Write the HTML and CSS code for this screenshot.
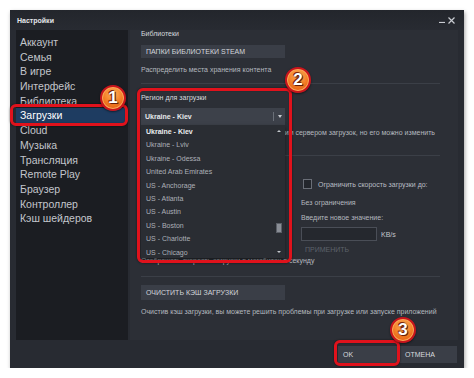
FILE: index.html
```html
<!DOCTYPE html>
<html lang="ru">
<head>
<meta charset="UTF-8" />
<meta name="viewport" content="width=device-width, initial-scale=1" />
<title>Настройки</title>
<link rel="stylesheet" href="styles.css">
</head>
<body>
  <div class="window">
    <!-- Title bar -->
    <div class="titlebar">
      <span class="title">Настройки</span>
      <span class="win-ctrl">
        <svg width="6" height="6" viewBox="0 0 6 6"><path d="M0 5.5h6" stroke="#c9ccd2" stroke-width="1.2"/></svg>
        <svg width="7" height="7" viewBox="0 0 7 7"><path d="M0.5 0.5l6 6M6.5 0.5l-6 6" stroke="#c9ccd2" stroke-width="1.2"/></svg>
      </span>
    </div>

    <div class="main">
      <!-- Sidebar -->
      <nav class="sidebar">
        <div class="nav-item">Аккаунт</div>
        <div class="nav-item">Семья</div>
        <div class="nav-item">В игре</div>
        <div class="nav-item">Интерфейс</div>
        <div class="nav-item">Библиотека</div>
        <div class="nav-item active">Загрузки</div>
        <div class="nav-item">Cloud</div>
        <div class="nav-item">Музыка</div>
        <div class="nav-item">Трансляция</div>
        <div class="nav-item">Remote Play</div>
        <div class="nav-item">Браузер</div>
        <div class="nav-item">Контроллер</div>
        <div class="nav-item">Кэш шейдеров</div>
      </nav>

      <!-- Content -->
      <section class="content">
        <div class="label first">Библиотеки</div>
        <div class="btn-wide">ПАПКИ БИБЛИОТЕКИ STEAM</div>
        <div class="hint gap7">Распределить места хранения контента</div>
        <div class="divider div-a"></div>

        <div class="label region">Регион для загрузки</div>
        <div class="select">
          <span class="select-value">Ukraine - Kiev</span>
          <span class="select-sep"></span>
          <span class="select-arrow"></span>
        </div>
        <div class="hint region-hint">Steam выбирает регион загрузки с ближайшим сервером загрузок, но его можно изменить</div>
        <div class="divider div-b"></div>

        <div class="limits">
          <div class="limits-left"></div>
          <div class="limits-right">
            <div class="check-row">
              <span class="checkbox"></span>
              <span>Ограничить скорость загрузки до:</span>
            </div>
            <div class="hint no-limit">Без ограничения</div>
            <div class="hint new-value">Введите новое значение:</div>
            <div class="input-row">
              <span class="input"></span>
              <span class="unit">KB/s</span>
            </div>
            <div class="apply">ПРИМЕНИТЬ</div>
          </div>
        </div>
        <div class="hint bits">Отображать скорость загрузки в мегабитах в секунду</div>
        <div class="divider div-c"></div>

        <div class="btn-wide cache">ОЧИСТИТЬ КЭШ ЗАГРУЗКИ</div>
        <div class="hint gap7">Очистив кэш загрузки, вы можете решить проблемы при загрузке или запуске приложений</div>

        <!-- Open dropdown -->
        <div class="dropdown">
          <div class="dd-item current">Ukraine - Kiev</div>
          <div class="dd-item">Ukraine - Lviv</div>
          <div class="dd-item">Ukraine - Odessa</div>
          <div class="dd-item">United Arab Emirates</div>
          <div class="dd-item">US - Anchorage</div>
          <div class="dd-item">US - Atlanta</div>
          <div class="dd-item">US - Austin</div>
          <div class="dd-item">US - Boston</div>
          <div class="dd-item">US - Charlotte</div>
          <div class="dd-item">US - Chicago</div>
          <div class="scrollbar">
            <span class="sb-up"></span>
            <span class="sb-thumb"></span>
            <span class="sb-down"></span>
          </div>
        </div>
      </section>
    </div>

    <!-- Footer buttons -->
    <div class="footer">
      <div class="btn">OK</div>
      <div class="btn">ОТМЕНА</div>
    </div>

    <!-- Annotations -->
    <div class="mark mark-1"></div>
    <div class="mark mark-2"></div>
    <div class="mark mark-3"></div>
    <div class="badge badge-1">1</div>
    <div class="badge badge-2">2</div>
    <div class="badge badge-3">3</div>
  </div>
</body>
</html>
```

FILE: styles.css
```css
* {
  margin: 0;
  padding: 0;
  box-sizing: border-box;
}

html, body {
  background: #fff;
  font-family: 'Liberation Sans', Arial, sans-serif;
  overflow: hidden;
}

.window {
  position: relative;
  width: 454px;
  height: 358px;
  margin: 10px 0 0 10px;
  background: #282b32;
  box-shadow: 1px 2px 4px rgba(0, 0, 0, 0.35);
}

/* Title bar */
.titlebar {
  height: 20px;
  padding: 0 9px 0 7px;
  display: flex;
  align-items: center;
  justify-content: space-between;
  background: linear-gradient(#23262c, #282b32);
}

.title {
  font-size: 7px;
  font-weight: bold;
  color: #e4e6ea;
}

.win-ctrl {
  display: flex;
  align-items: center;
  gap: 3px;
}

/* Main area */
.main {
  display: flex;
  gap: 2px;
  height: 310px;
  padding: 0 6px;
}

.sidebar {
  width: 112px;
  background: #1b1d22;
  padding-top: 5px;
}

.nav-item {
  height: 14.7px;
  line-height: 14.7px;
  padding-left: 4px;
  margin-right: 3px;
  font-size: 10.5px;
  color: #c3c6cc;
}

.nav-item.active {
  background: #1e3c61;
  color: #fff;
}

.content {
  position: relative;
  flex: 1;
  background: #2c2f36;
  padding-left: 11px;
  font-size: 7px;
  color: #b4b8bf;
}

.label {
  line-height: 9px;
  color: #d5d8dd;
}

.label.first { line-height: 8px; }
.label.region { margin-top: 9px; }

.btn-wide {
  width: 144px;
  height: 13px;
  margin-top: 7px;
  padding-left: 5px;
  line-height: 13px;
  background: #3a3e47;
  color: #d3d6db;
}

.btn-wide.cache {
  height: 15px;
  line-height: 15px;
  margin-top: 8px;
}

.hint {
  line-height: 10px;
  white-space: nowrap;
}

.gap7 { margin-top: 7px; }

.divider {
  width: 299px;
  height: 1px;
  background: #3b3f47;
}

.div-a { margin-top: 8px; }
.div-b { margin-top: 17px; }
.div-c { margin-top: 10px; }

.select {
  display: flex;
  align-items: center;
  width: 144px;
  height: 17px;
  margin-top: 6px;
  background: #3d414a;
}

.select-value {
  flex: 1;
  padding-left: 4px;
  font-weight: bold;
  color: #e6e8eb;
}

.select-sep {
  width: 1px;
  height: 9px;
  background: #6a6f78;
}

.select-arrow {
  width: 11px;
  display: flex;
  justify-content: center;
}

.select-arrow::after {
  content: "";
  border-left: 2.5px solid transparent;
  border-right: 2.5px solid transparent;
  border-top: 3px solid #c8cbd0;
}

.region-hint { margin-top: 3px; }

/* Download limits */
.limits {
  display: grid;
  grid-template-columns: 144px 1fr;
  gap: 16px;
}

.check-row {
  display: flex;
  align-items: center;
  gap: 6px;
  height: 10px;
  margin-top: 23px;
  padding-left: 2px;
  color: #b9bdc4;
}

.checkbox {
  width: 9px;
  height: 10px;
  border: 1px solid #6a6e77;
  background: #23262c;
}

.no-limit { margin-top: 9px; }
.new-value { margin-top: 5px; }

.input-row {
  display: flex;
  align-items: center;
  gap: 4px;
  margin-top: 4px;
}

.input {
  width: 76px;
  height: 14px;
  border: 1px solid #4a4e57;
  background: #25282e;
}

.unit { color: #c2c5cb; }

.apply {
  margin-top: 4px;
  padding-left: 4px;
  line-height: 10px;
  color: #5d626b;
}

.bits { margin-top: 1px; }

/* Dropdown list */
.dropdown {
  position: absolute;
  left: 11px;
  top: 95px;
  width: 144px;
  height: 133px;
  background: #2a2d33;
  box-shadow: 0 2px 4px rgba(0, 0, 0, 0.5);
}

.dd-item {
  height: 13.4px;
  line-height: 13.4px;
  padding-left: 5px;
  color: #acb0b8;
}

.dd-item.current {
  font-weight: bold;
  color: #eceef0;
}

.scrollbar {
  position: absolute;
  right: 2px;
  top: 0;
  bottom: 0;
  width: 8px;
}

.sb-up, .sb-down {
  position: absolute;
  left: 2px;
  border-left: 2px solid transparent;
  border-right: 2px solid transparent;
}

.sb-up {
  top: 5px;
  border-bottom: 2.5px solid #c4c7cc;
}

.sb-down {
  bottom: 5px;
  border-top: 2.5px solid #c4c7cc;
}

.sb-thumb {
  position: absolute;
  left: 1px;
  top: 98px;
  width: 6px;
  height: 10px;
  background: #8a8e96;
  border: 1px solid #5b5f67;
}

/* Footer */
.footer {
  height: 28px;
  display: flex;
  align-items: center;
  justify-content: flex-end;
  gap: 3px;
  padding-right: 7px;
}

.btn {
  width: 59px;
  height: 17px;
  padding-left: 5px;
  line-height: 17px;
  font-size: 7px;
  background: #3a3e47;
  color: #d8dade;
}

.btn + .btn { width: 57px; }

/* Annotation marks */
.mark {
  position: absolute;
  border: 3px solid #e0121c;
  border-radius: 6px;
  box-shadow: 0 0 2px rgba(0, 0, 0, 0.6), inset 0 0 1px rgba(0, 0, 0, 0.5);
}

.mark-1 { left: 0; top: 94px; width: 118px; height: 22px; }
.mark-2 { left: 127px; top: 78px; width: 155px; height: 175px; }
.mark-3 { left: 324px; top: 330px; width: 66px; height: 26px; }

.badge {
  position: absolute;
  width: 26px;
  height: 26px;
  border-radius: 50%;
  border: 2px solid #c9141c;
  background: radial-gradient(circle at 50% 30%, #ffb25a, #f27a22 55%, #d9500f);
  box-shadow: 0 1px 2px rgba(0, 0, 0, 0.5), inset 0 0 0 1px #f9a65a;
  display: flex;
  align-items: center;
  justify-content: center;
  font-size: 17px;
  font-weight: bold;
  color: #fff;
  text-shadow: 0 0 2px #5a1a05, 1px 1px 0 #6b2008, -1px -1px 0 #8a2a0b;
}

.badge-1 { left: 90px; top: 75px; }
.badge-2 { left: 275px; top: 57px; }
.badge-3 { left: 380px; top: 307px; }
```
